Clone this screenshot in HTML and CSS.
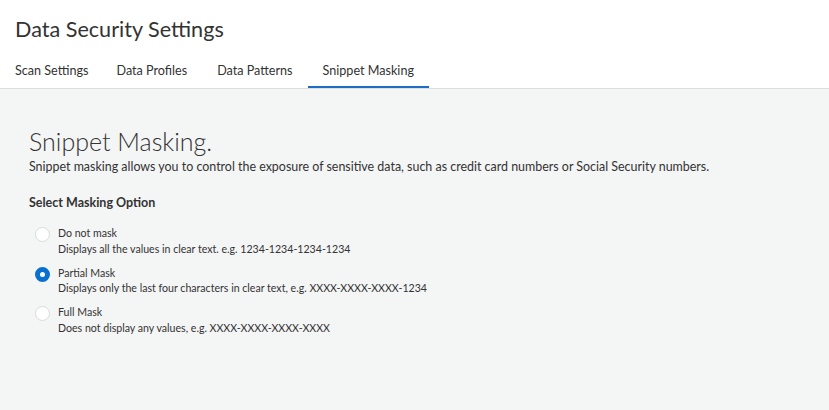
FILE: index.html
```
<!DOCTYPE html>
<html>
<head>
<meta charset="utf-8">
<link rel="stylesheet" href="styles.css">
</head>
<body>
<header class="header">
  <h1 class="title">Data Security Settings</h1>
  <nav class="tabs">
    <div class="tab first">Scan Settings</div>
    <div class="tab">Data Profiles</div>
    <div class="tab">Data Patterns</div>
    <div class="tab active">Snippet Masking</div>
  </nav>
</header>
<main class="content">
  <h2 class="heading">Snippet Masking.</h2>
  <p class="desc">Snippet masking allows you to control the exposure of sensitive data, such as credit card numbers or Social Security numbers.</p>
  <div class="section-title">Select Masking Option</div>
  <div class="options">
    <div class="option">
      <span class="radio"></span>
      <div class="option-text">
        <div class="option-label">Do not mask</div>
        <div class="option-desc">Displays all the values in clear text. e.g. 1234-1234-1234-1234</div>
      </div>
    </div>
    <div class="option">
      <span class="radio checked"></span>
      <div class="option-text">
        <div class="option-label">Partial Mask</div>
        <div class="option-desc">Displays only the last four characters in clear text, e.g. XXXX-XXXX-XXXX-1234</div>
      </div>
    </div>
    <div class="option">
      <span class="radio"></span>
      <div class="option-text">
        <div class="option-label">Full Mask</div>
        <div class="option-desc">Does not display any values, e.g. XXXX-XXXX-XXXX-XXXX</div>
      </div>
    </div>
  </div>
</main>
</body>
</html>
```
FILE: styles.css
```
html, body {
  margin: 0;
  padding: 0;
  height: 100%;
}
body {
  font-family: Lato, "Open Sans", sans-serif;
  color: #333;
  background: #f4f5f5;
  display: flex;
  flex-direction: column;
}
.header {
  background: #fff;
  border-bottom: 1px solid #dddddd;
}
.title {
  margin: 0;
  padding: 14px 15px 0;
  font-size: 21.6px;
  font-weight: 400;
  line-height: 30px;
  color: #333;
}
.tabs {
  display: flex;
  margin-top: 12px;
}
.tab {
  padding: 0 15px;
  font-size: 12.6px;
  line-height: 30px;
  height: 32px;
  box-sizing: border-box;
  color: #333;
}
.tab.first {
  padding-right: 13px;
}
.tab.active {
  border-bottom: 2px solid #1b6ec2;
}
.content {
  flex: 1;
  padding: 36px 29px 0;
}
.heading {
  margin: 0;
  font-size: 25px;
  font-weight: 300;
  line-height: 33px;
  color: #333;
}
.desc {
  margin: 0;
  font-size: 12.45px;
  line-height: 18px;
}
.section-title {
  margin-top: 18px;
  font-size: 12.5px;
  font-weight: 700;
  line-height: 18px;
}
.options {
  margin-top: 14px;
  display: flex;
  flex-direction: column;
  gap: 8.5px;
  padding-left: 6px;
}
.option {
  display: flex;
  align-items: flex-start;
  gap: 8px;
}
.radio {
  width: 15px;
  height: 15px;
  border-radius: 50%;
  box-sizing: border-box;
  border: 1px solid #d8dadc;
  background: #fff;
  flex-shrink: 0;
  margin-top: 1px;
}
.radio.checked {
  border: 5px solid #0a70d0;
}
.option-label, .option-desc {
  font-size: 10.6px;
  line-height: 15.5px;
}
```
